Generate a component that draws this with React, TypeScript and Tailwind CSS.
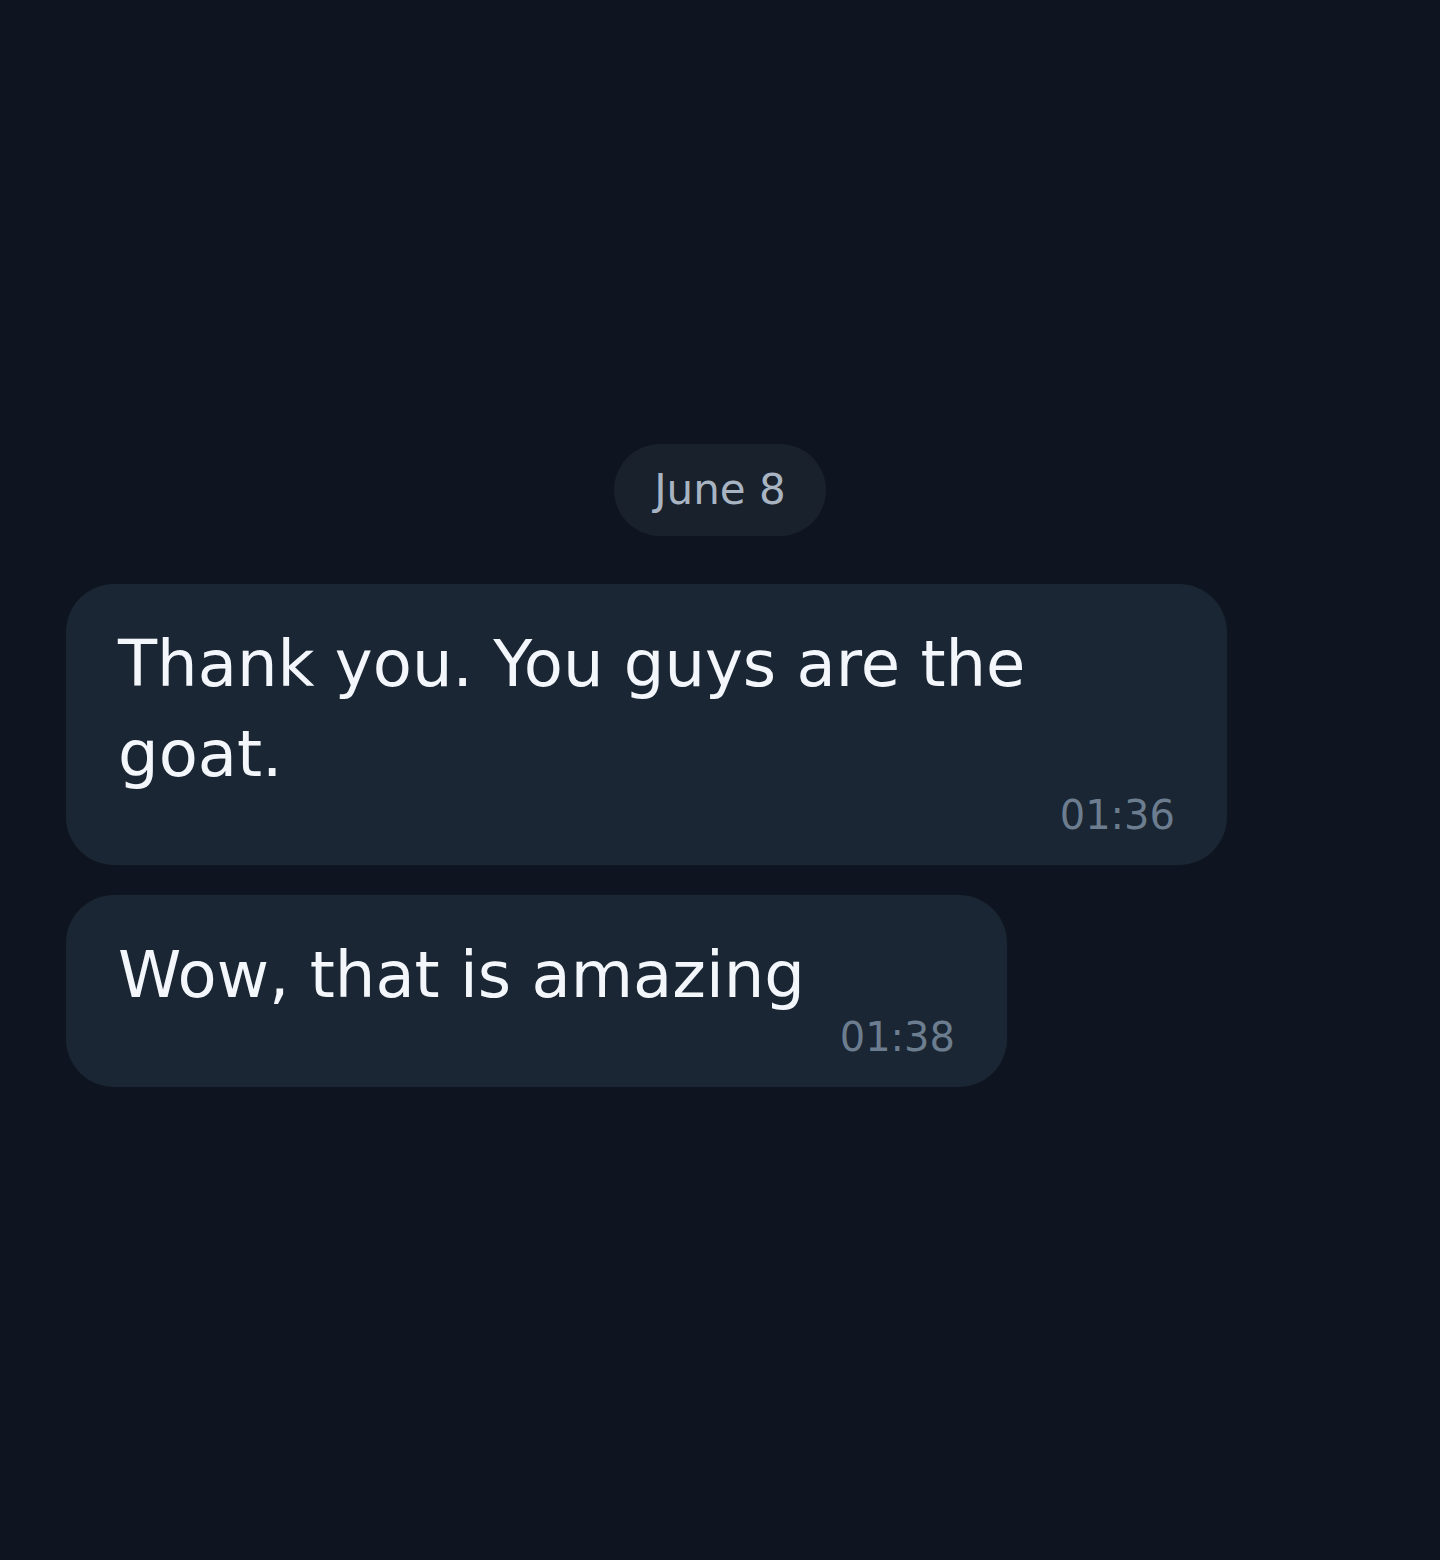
export default function App() {
  return (
    <div
      className="min-h-[1560px] w-full bg-[#0f1520] pt-[444px] px-[66px]"
      style={{ fontFamily: '"DejaVu Sans", Verdana, sans-serif' }}
    >
      <div className="flex justify-center">
        <div className="h-[92px] px-[40px] flex items-center rounded-full bg-[#18212c] text-[42px] leading-none text-[#a9b4c2]">
          June 8
        </div>
      </div>
      <div className="mt-[48px] flex flex-col items-start gap-[30px]">
        <div className="w-[1161px] rounded-[48px] bg-[#1a2633] px-[52px] pt-[36px] pb-[30px]">
          <div className="text-[64px] leading-[1.4] text-[#f3f6fa]">
            Thank you. You guys are the goat.
          </div>
          <div className="-mt-[4px] text-right text-[40px] leading-none text-[#6c7d8f]">01:36</div>
        </div>
        <div className="w-[941px] rounded-[48px] bg-[#1a2633] px-[52px] pt-[36px] pb-[30px]">
          <div className="text-[64px] leading-[1.4] text-[#f3f6fa]">Wow, that is amazing</div>
          <div className="-mt-[4px] text-right text-[40px] leading-none text-[#6c7d8f]">01:38</div>
        </div>
      </div>
    </div>
  );
}
